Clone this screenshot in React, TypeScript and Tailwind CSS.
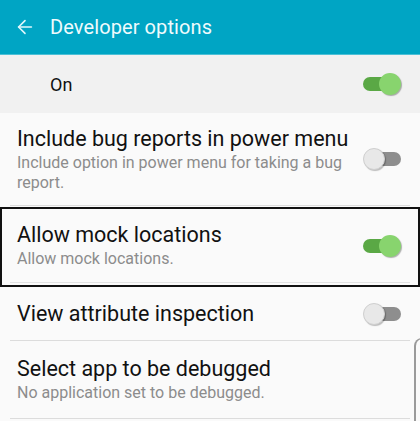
import { ArrowLeft } from "lucide-react";

type Row = {
	title: string;
	subtitle?: string;
	on: boolean;
	height: string;
	boxed?: boolean;
	toggle?: boolean;
};

function Toggle({ on }: { on: boolean }) {
	if (on) {
		return (
			<div className="relative w-[38px] h-[22px] flex items-center">
				<div className="w-[30px] h-[14px] rounded-full bg-[#5aa845]" />
				<div className="absolute right-0 top-0 w-[22px] h-[22px] rounded-full bg-[#88d46e] shadow-[1px_1px_1px_rgba(0,0,0,0.3)]" />
			</div>
		);
	}
	return (
		<div className="relative w-[38px] h-[22px] flex items-center justify-end">
			<div className="w-[30px] h-[14px] rounded-full bg-[#8e8e8e]" />
			<div className="absolute left-0 top-0 w-[22px] h-[22px] rounded-full bg-[#e8e8e8] border border-[#cfcfcf] shadow-[1px_1px_1px_rgba(0,0,0,0.25)]" />
		</div>
	);
}

export default function App() {
	const rows: Row[] = [
		{
			title: "Include bug reports in power menu",
			subtitle: "Include option in power menu for taking a bug report.",
			on: false,
			height: "h-[92px]",
			toggle: true,
		},
		{
			title: "Allow mock locations",
			subtitle: "Allow mock locations.",
			on: true,
			height: "h-[73px]",
			boxed: true,
			toggle: true,
		},
		{
			title: "View attribute inspection",
			on: false,
			height: "h-[53px]",
			toggle: true,
		},
		{
			title: "Select app to be debugged",
			subtitle: "No application set to be debugged.",
			on: false,
			height: "h-[77px]",
		},
	];

	return (
		<div
			className="relative w-[420px] h-[421px] overflow-hidden bg-[#fafafa]"
			style={{ fontFamily: "Roboto, 'Noto Sans', sans-serif" }}>
			{/* App bar */}
			<div className="h-[55px] bg-[#00a5c4] border-b border-[#4cc0d6] flex items-center">
				<ArrowLeft className="ml-[14px] w-[22px] h-[22px] text-[#e0f7fb]" strokeWidth={1.75} />
				<span className="ml-[14px] text-[20px] text-[#effbfd] tracking-[0.1px]">
					Developer options
				</span>
			</div>

			{/* Master switch */}
			<div className="h-[58px] bg-[#f1f1f1] flex items-center justify-between pl-[50px] pr-[19px]">
				<span className="text-[18px] text-[#111]">On</span>
				<Toggle on />
			</div>

			{/* Settings list */}
			<div className="flex flex-col">
				{rows.map((row) => {
					const body = (
						<div
							className={`${row.height} flex items-center justify-between ${row.boxed ? "pl-[15px] pr-[17px]" : "pl-[17px] pr-[19px]"}`}>
							<div className="flex flex-col max-w-[345px]">
								<span className="text-[21.5px] leading-[26px] text-[#111]">{row.title}</span>
								{row.subtitle && (
									<span className="text-[16px] leading-[20px] text-[#8c8c8c] mt-[1px]">
										{row.subtitle}
									</span>
								)}
							</div>
							{row.toggle && <Toggle on={row.on} />}
						</div>
					);
					if (row.boxed) {
						return (
							<div key={row.title} className="pt-[1px]">
								<div className="border-2 border-[#111]">
									{body}
									<div className="mx-[8px] h-px bg-[#e2e2e2]" />
									<div className="h-[2px]" />
								</div>
							</div>
						);
					}
					return (
						<div key={row.title}>
							{body}
							<div className="mx-[10px] h-px bg-[#dcdcdc]" />
						</div>
					);
				})}
			</div>

			{/* scroll edge */}
			<div className="absolute left-[414px] top-[338px] w-[12px] h-[100px] border-l-2 border-t border-[#9a9a9a] rounded-tl-[8px]" />
		</div>
	);
}
